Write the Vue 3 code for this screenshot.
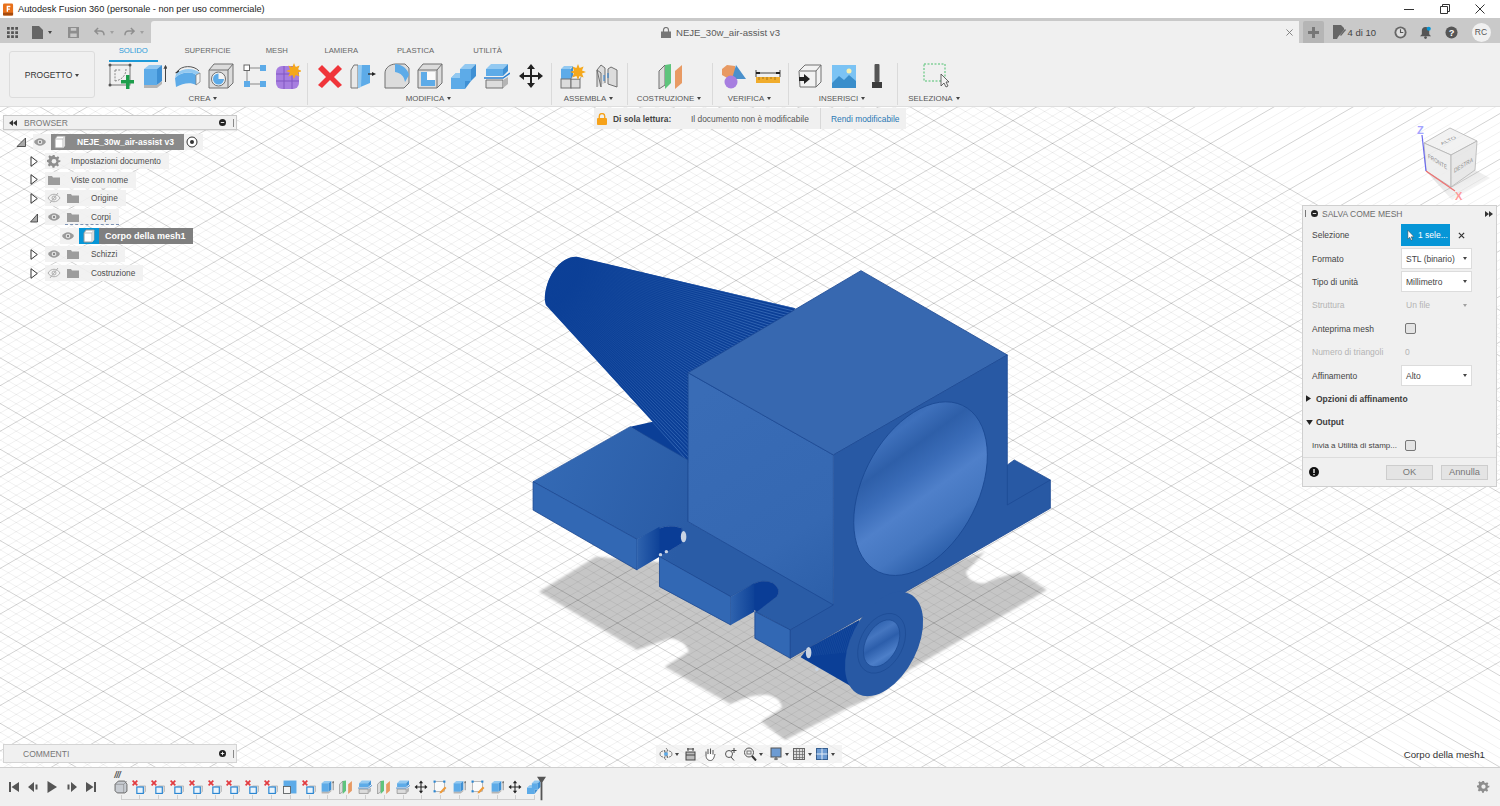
<script setup>
const B = '#5dabe8', BD = '#3f90d4', BL = '#93c9f1', G = '#dcdcdc', GD = '#b5b5b5', O = '#707070'
const sun = (x, y) => `<path d="M${x} ${y - 7}l1.6 4 4-1.6-1.6 4 4 1.6-4 1.6 1.6 4-4-1.6-1.6 4-1.6-4-4 1.6 1.6-4-4-1.6 4-1.6-1.6-4 4 1.6z" fill="#f5a81c"/>`
const icons = {
  sketch: `<rect x="2" y="2" width="20" height="20" fill="none" stroke="#777"/><g fill="#555"><circle cx="2" cy="2" r="1.5"/><circle cx="22" cy="2" r="1.5"/><circle cx="2" cy="22" r="1.5"/></g><path d="M7 7h6M18 6c0 6-4 11-11 12M7 7v11" fill="none" stroke="#888" stroke-dasharray="2 1.2"/><path d="M18 12h3.500v5H26v3.500h-4.500V26H18v-5.500h-5V17h5z" fill="#1d9e4c"/>`,
  extrude: `<path d="M3 6l5-4h13L16 6z" fill="${BL}"/><rect x="3" y="6" width="13" height="16" fill="${B}"/><path d="M16 6l5-4v16l-5 4z" fill="${BD}"/><path d="M3 22h13l5-4v3l-5 4H3z" fill="${GD}"/><path d="M24.500 19V3M23 6l1.500-3.500L26 6" fill="none" stroke="#444"/>`,
  revolve: `<path d="M2 9C6 2 19 2 24 8" fill="none" stroke="#555"/><path d="M0 10l4-3 .5 4z" fill="#333"/><path d="M0 15c6-6 16-7 21-3v10c-5-3-13-2-20 2z" fill="${B}"/><path d="M0 15c6-6 16-7 21-3l4-2c-7-6-18-5-24 1z" fill="${BL}"/><path d="M21 12l4-2v9l-4 3z" fill="#f2f2f2" stroke="#777" stroke-width=".7"/>`,
  hole: `<path d="M1 7l5-6h19v19l-5 5H1z" fill="${G}" stroke="${O}"/><path d="M1 7h19l5-6M20 7v18" fill="none" stroke="${O}"/><circle cx="10.500" cy="16" r="7" fill="#f4f4f4" stroke="${O}"/><path d="M10.500 16V10.500a5.500 5.500 0 1 1-5.500 5.500z" fill="${B}" transform="rotate(90 10.500 16)"/>`,
  pattern: `<g stroke="#888"><path d="M8 5h10M5 8v10M8 21h10" fill="none"/></g><rect x="2" y="2" width="5.500" height="5.500" fill="#fff" stroke="#666"/><rect x="18" y="2" width="6" height="6" fill="${B}"/><rect x="2" y="18" width="6" height="6" fill="${B}"/><rect x="18" y="18" width="6" height="6" fill="${B}"/>`,
  form: `<rect x="1" y="3" width="23" height="23" rx="6" fill="#a77ee0"/><path d="M1 11h23M1 18h23M9 3v23M17 3v23" stroke="#8156c2" fill="none"/>${sun(19, 7)}`,
  del: `<path d="M5 2l8 8 8-8 4 4-8 8 8 8-4 3-8-8-8 8-4-3 8-8-8-8z" fill="#f0353a"/>`,
  press: `<path d="M1 7l3-5h4v23H1z" fill="#e8e8e8" stroke="#777"/><path d="M8 2h12v18L8 25z" fill="${B}"/><path d="M8 2h4l-1 22-3 1z" fill="${BL}"/><path d="M18 11h5" stroke="#333" stroke-width="1.400"/><path d="M22 9l4 2-4 2z" fill="#222"/>`,
  fillet: `<path d="M1 25V10C1 5 6 1 12 1h9l4 4v15l-5 5z" fill="${G}" stroke="${O}"/><path d="M11 1c7 0 13 5 14 11l-4 7c-1-6-4-9-10-10z" fill="${B}"/>`,
  shell: `<path d="M1 7l5-6h19v19l-5 5H1z" fill="${G}" stroke="${O}"/><path d="M1 7h19l5-6M20 7v18" fill="none" stroke="${O}"/><rect x="4" y="9" width="14" height="14" fill="#fafafa"/><path d="M4 9h6v8H18v6H4z" fill="${B}"/>`,
  combine: `<path d="M9 6l5-5h11l-5 5z" fill="${BL}"/><path d="M9 6h11v12H9z" fill="${B}"/><path d="M20 6l5-5v12l-5 5z" fill="${BD}"/><path d="M0 15l5-5h9v16H0z" fill="${B}"/><path d="M0 15l5-5h4v5z" fill="${BL}"/><path d="M14 18h6l-6 8z" fill="${BD}"/>`,
  split: `<path d="M2 6l5-5h17l-5 5z" fill="${BL}"/><rect x="2" y="6" width="17" height="7" fill="${B}"/><path d="M19 6l5-5v7l-5 5z" fill="${BD}"/><path d="M0 15h19l7-5" fill="none" stroke="#2a7fd0" stroke-width="1.500"/><path d="M2 17h17v8H2z" fill="${G}" stroke="${O}"/><path d="M19 17l5-3v7l-5 4z" fill="${GD}"/>`,
  move: `<path d="M13 1l4 5h-3v6h6V9l5 4-5 4v-3h-6v6h3l-4 5-4-5h3v-6H6v3l-5-4 5-4v3h6V6H9z" fill="#222"/>`,
  asm: `<path d="M1 6l3-3h9l-3 3z" fill="${BL}"/><rect x="1" y="6" width="10" height="10" fill="${B}"/><path d="M11 6l2-3v10l-2 3z" fill="${BD}"/><rect x="1" y="16" width="10" height="9" fill="${G}" stroke="${O}"/><rect x="11" y="16" width="9" height="9" fill="${G}" stroke="${O}"/><path d="M13 12h9l-2 4h-9z" fill="#f4f4f4" stroke="${O}" stroke-width=".6"/>${sun(18, 8)}`,
  joint: `<path d="M3 24V7l4-5 4 3v15M3 7l4 3v14z" fill="${G}" stroke="${O}"/><path d="M23 24V7l-6-3-3 2v15z" fill="${G}" stroke="${O}"/><path d="M10 12v6M14 10v5" stroke="#2a7fd0"/>`,
  plane: `<path d="M1 8l6-6v20l-6 4z" fill="${G}" stroke="${O}"/><path d="M7 2l6-1v19l-6 6z" fill="#5ec47c"/><path d="M17 8l7-6v18l-7 6z" fill="#e89a63"/>`,
  inspect: `<path d="M1 6l5-4 8 1v9l-6 4-7-4z" fill="#e89a63"/><path d="M15 2l10 14H11z" fill="#4a90cc"/><circle cx="10" cy="19" r="6.500" fill="#a77ee0"/>`,
  measure: `<path d="M1 10h24M1 7v7M25 7v7" stroke="#444" fill="none"/><path d="M5 10H1M21 10h4" stroke="#222" stroke-width="2"/><rect x="1" y="14" width="24" height="6" fill="#f0ac2c"/><path d="M4 14v3M8 14v2M12 14v3M16 14v2M20 14v3" stroke="#8a5e10" stroke-width=".7"/>`,
  insert: `<path d="M2 8l6-6h16v17l-5 5H3z" fill="#f2f2f2" stroke="${O}"/><path d="M3 8h16l5-6M19 8v16" fill="none" stroke="${O}"/><path d="M2 14h5v-3l6 5-6 5v-3H2z" fill="#222"/>`,
  canvas: `<rect x="1" y="2" width="24" height="23" fill="#7bc3f4"/><circle cx="18" cy="8" r="2.500" fill="#f7f0b0"/><path d="M1 20l7-7 5 4 5-5 7 6v7H1z" fill="#3a8ecb"/>`,
  bolt: `<rect x="10.500" y="1" width="5" height="18" rx="1" fill="#555"/><path d="M8 19h10v6H8z" fill="#3d3d3d"/>`,
  select: `<rect x="1" y="1" width="21" height="17" fill="none" stroke="#4cc06e" stroke-dasharray="2 1.500"/><path d="M18 11l0 12 3-3 2 4 2-1-2-4h3z" fill="#f2f2f2" stroke="#444" stroke-width=".8"/>`,
  tdel: `<path d="M0 2l2-2 3 3 3-3 2 2-3 3 3 3-2 2-3-3-3 3-2-2 3-3z" fill="#e23b40" transform="scale(1.100)"/><path d="M11 14l3-3h11v10l-3 3H11z" fill="#ddd" stroke="#999"/><rect x="9" y="13" width="12" height="12" fill="#e8f3fc" stroke="#2a86d2" stroke-width="2.200"/>`,
  torigin: `<path d="M2 8l6-6h12l4 6v13l-4 3H6l-4-4z" fill="#c8ccd2" stroke="#666" stroke-width="1.800"/><path d="M2 8h16l6-6M18 8v16" fill="none" stroke="#777"/>`,
  tshell: `<path d="M1 1h24v24H1z" fill="${B}"/><rect x="1" y="12" width="13" height="13" fill="#f4f4f4" stroke="#555" stroke-width="1.500"/>`,
  tsk: `<rect x="3" y="3" width="18" height="18" fill="#fafafa" stroke="#888"/><g fill="#2a86d2"><rect x="1" y="1" width="4" height="4"/><rect x="19" y="1" width="4" height="4"/><rect x="1" y="19" width="4" height="4"/></g><path d="M13 22l9-10 3 3-9 9-4 1z" fill="#ee9a3a"/>`
}
const groups = [
  { label: 'CREA', w: 207, items: ['sketch', 'extrude', 'revolve', 'hole', 'pattern', 'form'] },
  { label: 'MODIFICA', w: 244, items: ['del', 'press', 'fillet', 'shell', 'combine', 'split', 'move'] },
  { label: 'ASSEMBLA', w: 76, items: ['asm', 'joint'] },
  { label: 'COSTRUZIONE', w: 85, items: ['plane'] },
  { label: 'VERIFICA', w: 76, items: ['inspect', 'measure'] },
  { label: 'INSERISCI', w: 109, items: ['insert', 'canvas', 'bolt'] },
  { label: 'SELEZIONA', w: 75, items: ['select'] }
]
const tabs = [
  { t: 'SOLIDO', w: 67.5 },
  { t: 'SUPERFICIE', w: 81 },
  { t: 'MESH', w: 57.5 },
  { t: 'LAMIERA', w: 71.5 },
  { t: 'PLASTICA', w: 77 },
  { t: 'UTILITÀ', w: 67 }
]
const timeline = ['torigin', 'tdel', 'tdel', 'tdel', 'tdel', 'tdel', 'tdel', 'tdel', 'tdel', 'tshell', 'tdel', 'extrude', 'plane', 'split', 'plane', 'split', 'move', 'tsk', 'extrude', 'tsk', 'extrude', 'move', 'combine']

const k = Math.tan(Math.PI / 6)
const step = 45.67 / 5
let minor = '', major = ''
for (let i = -90; i <= 90; i++) {
  const a = 266.5 + i * step
  const b = 340.1 + (i + 40) * step
  const sa = `M0 ${a.toFixed(1)}L1500 ${(a + 1500 * k).toFixed(1)}`
  const sb = `M0 ${b.toFixed(1)}L1500 ${(b - 1500 * k).toFixed(1)}`
  if (((i % 5) + 5) % 5 === 0) major += sa + sb
  else minor += sa + sb
}
let coneLines = ''
const a0 = Math.atan(0.242), a1 = Math.atan(1.148)
for (let i = 0; i <= 64; i++) {
  const t = a0 + (a1 - a0) * i / 64
  coneLines += `M-102 -43L${(-102 + 1300 * Math.cos(t)).toFixed(1)} ${(-43 + 1300 * Math.sin(t)).toFixed(1)}`
}
let bossLines = ''
for (let i = 0; i < 34; i++) {
  const x = 815 + i * 5.500
  bossLines += `M${x} ${1222 - i * 0.6}l25 -90`
}

const eye = `<path d="M1 7c3-5 9-5 12 0-3 5-9 5-12 0z" fill="#9a9a9a"/><circle cx="7" cy="7" r="2.300" fill="#e8e8e8"/><circle cx="7" cy="7" r="1.200" fill="#888"/>`
const eyeOff = `<path d="M1 7c3-5 9-5 12 0-3 5-9 5-12 0z" fill="none" stroke="#b0b0b0"/><circle cx="7" cy="7" r="2" fill="none" stroke="#b0b0b0"/><path d="M3 12L11 2" stroke="#b0b0b0"/>`
const folder = `<path d="M1 3h4l1 1.500h7V12H1z" fill="#9c9c9c"/>`
const gear = `<path d="M6 1h2l.4 1.800 1.500.6 1.600-1 1.400 1.400-1 1.600.6 1.500L14 6.300v2l-1.800.4-.6 1.500 1 1.600-1.400 1.400-1.600-1-1.500.6L7.800 14.500h-2l-.4-1.800-1.500-.6-1.600 1-1.400-1.400 1-1.600-.6-1.500L0 8.300v-2l1.800-.4.6-1.500-1-1.600 1.400-1.400 1.600 1 1.500-.6z" fill="#8e8e8e" transform="scale(.95)"/><circle cx="7" cy="7.200" r="2.300" fill="#f0f0f0"/>`
const box = `<path d="M2 4l2-3h8v10l-2 2H2z" fill="#fff" stroke="#999"/><path d="M2 4h8l2-3M10 4v9" fill="none" stroke="#bbb"/><path d="M10 4l2-3v10l-2 2z" fill="#dcdcdc"/>`
const radio = `<circle cx="7" cy="7" r="5" fill="#fff" stroke="#333"/><circle cx="7" cy="7" r="2" fill="#333"/>`
const tree = [
  { cls: 'lv1', a: gear, text: 'Impostazioni documento' },
  { cls: 'lv1', a: folder, text: 'Viste con nome' },
  { cls: 'lv1', a: eyeOff, b: folder, text: 'Origine' },
  { cls: 'lv1 corpi', open: true, a: eye, b: folder, text: 'Corpi' },
  { sel: true },
  { cls: 'lv1', a: eye, b: folder, text: 'Schizzi' },
  { cls: 'lv1', a: eyeOff, b: folder, text: 'Costruzione' }
]
const nav = [
  { d: `<circle cx="7" cy="7" r="2" fill="#5dabe8"/><path d="M7 1l2 2.500H8V5.500M6 5.500V3.500H5zM7 13l-2-2.500h1V8.500M8 8.500v2h1zM1 7c0-2 1.500-2.800 3-3M13 7c0 2-1.500 2.800-3 3M1 7c0 2 1.500 2.800 3 3M13 7c0-2-1.500-2.800-3-3" fill="none" stroke="#666" stroke-width=".8"/>`, c: 1 },
  { d: `<rect x="3" y="5" width="9" height="8" fill="#bbb" stroke="#444"/><path d="M3 8h9M5 1v3M10 1v3M4 2h7" stroke="#444" fill="none"/>` },
  { d: `<path d="M3 8V4.500M5 7V2M7.500 7V1.500M10 7.500V3M3 8c0 4 2 5.500 4.500 5.500S11 11 12 7" fill="#fff" stroke="#555"/>` },
  { d: `<circle cx="6" cy="7" r="3.500" fill="none" stroke="#555"/><path d="M8 10l3 3.500M11 1v5M8.500 3.500h5" stroke="#444" fill="none"/>` },
  { d: `<circle cx="6" cy="5.500" r="4.500" fill="#eee" stroke="#555"/><path d="M9 9l4 4.500" stroke="#333" stroke-width="2"/><rect x="4" y="4" width="4" height="3" fill="none" stroke="#777"/>`, c: 1 },
  { d: `<rect x="2" y="1" width="10" height="9" fill="#6d9bd2" stroke="#555"/><path d="M5 12h4M7 10v3" stroke="#555"/>`, c: 1 },
  { d: `<rect x="1.500" y="1.500" width="11" height="11" fill="#ddd" stroke="#666"/><path d="M1.500 4.500h11M1.500 7.500h11M1.500 10.500h11M4.500 1.500v11M7.500 1.500v11M10.500 1.500v11" stroke="#666" stroke-width=".7"/>`, c: 1 },
  { d: `<rect x="1.500" y="1.500" width="11" height="11" fill="#6d9bd2" stroke="#355e8f"/><path d="M7 1.500v11M1.500 7h11" stroke="#e6eef8"/>`, c: 1 }
]
</script>

<template>
  <div class="app">
    <header class="titlebar">
      <svg class="appicon" viewBox="0 0 12 13"><rect width="11" height="13" rx="1.500" fill="#e8701a" /><rect y="10" width="11" height="3" fill="#a64a0c" /><path d="M4 2.500h4v1.500H5.500v1.300H7.500v1.400H5.500V9H4z" fill="#fff" /></svg>
      <span class="apptitle">Autodesk Fusion 360 (personale - non per uso commerciale)</span>
      <div class="winbtns">
        <svg viewBox="0 0 12 12"><path d="M1 6.500h10" stroke="#333" /></svg>
        <svg viewBox="0 0 12 12"><path d="M1.500 3.500h7v7h-7zM3.500 3.500v-2h7v7h-2" fill="none" stroke="#333" /></svg>
        <svg viewBox="0 0 12 12"><path d="M1.500 1.500l9 9M10.500 1.500l-9 9" stroke="#333" /></svg>
      </div>
    </header>

    <div class="tabstrip">
      <div class="quick">
        <svg class="q-grid" viewBox="0 0 12 12"><path d="M0 0h3v3H0zM4.500 0h3v3h-3zM9 0h3v3H9zM0 4.500h3v3H0zM4.500 4.500h3v3h-3zM9 4.500h3v3H9zM0 9h3v3H0zM4.500 9h3v3h-3zM9 9h3v3H9z" fill="#555" /></svg>
        <svg class="q-file" viewBox="0 0 11 13"><path d="M0 0h7l4 4v9H0z" fill="#666" /></svg>
        <i class="caret dk"></i>
        <svg class="q-save" viewBox="0 0 12 12"><path d="M0 0h12v12H0z" fill="#8e8e8e" /><path d="M3 1h6v3H3zM2.500 7h7v4h-7z" fill="#c8c8c8" /></svg>
        <svg class="q-undo" viewBox="0 0 12 11"><path d="M4.500 1L1 4.500 4.500 8M1 4.500h6c2.500 0 4 1.500 4 4.500" fill="none" stroke="#8e8e8e" stroke-width="1.600" /></svg>
        <i class="caret lt"></i>
        <svg class="q-redo" viewBox="0 0 12 11"><path d="M7.500 1L11 4.500 7.500 8M11 4.500H5C2.500 4.500 1 6 1 9" fill="none" stroke="#8e8e8e" stroke-width="1.600" /></svg>
        <i class="caret lt"></i>
      </div>
      <div class="doctab">
        <svg class="lockicon" viewBox="0 0 10 11"><path d="M2.500 5V3a2.500 2.500 0 0 1 5 0v2" fill="none" stroke="#777" stroke-width="1.200" /><rect y="4.500" width="10" height="6.500" fill="#777" /></svg>
        <span class="docname">NEJE_30w_air-assist v3</span>
        <svg class="tabclose" viewBox="0 0 8 8"><path d="M.5.500l7 7M7.500.500l-7 7" stroke="#777" /></svg>
      </div>
      <div class="acct">
        <span class="plus"><svg viewBox="0 0 11 11"><path d="M4 0h3v4h4v3H7v4H4V7H0V4h4z" fill="#777" /></svg></span>
        <svg class="a-doc" viewBox="0 0 13 14"><path d="M0 0h8l3 3v2L5 12l-1 2H0z" fill="#666" /><path d="M7 10l5-6 1 1-5 6z" fill="#666" /></svg>
        <span class="count">4 di 10</span>
        <svg class="a-clock" viewBox="0 0 14 14"><circle cx="7" cy="7" r="6.500" fill="#666" /><circle cx="7" cy="7" r="4.500" fill="#ddd" /><path d="M7 3.500V7h3" fill="none" stroke="#555" stroke-width="1.200" /></svg>
        <svg class="a-bell" viewBox="0 0 13 14"><path d="M6 1c3 0 4 2 4 4v4l2 2H0l2-2V5c0-2 1-4 4-4z" fill="#555" /><circle cx="6" cy="12.500" r="1.500" fill="#555" /><circle cx="9.500" cy="3" r="2.200" fill="#0696d7" /></svg>
        <svg class="a-help" viewBox="0 0 14 14"><circle cx="7" cy="7" r="6.500" fill="#555" /><text x="7" y="10.500" class="helpq">?</text></svg>
        <span class="avatar">RC</span>
      </div>
    </div>

    <section class="ribbon">
      <div class="project-wrap"><button class="project">PROGETTO<i class="caret dk"></i></button></div>
      <div class="ribbon-main">
        <nav class="tabs">
          <span v-for="(t, i) in tabs" :key="t.t" class="tab" :class="{ active: i === 0 }" :style="{ width: t.w + 'px' }">{{ t.t }}</span>
        </nav>
        <div class="groups">
          <div v-for="g in groups" :key="g.label" class="group" :style="{ width: g.w + 'px' }">
            <div class="tools">
              <svg v-for="it in g.items" :key="it" class="tool" viewBox="0 0 26 26" v-html="icons[it]"></svg>
            </div>
            <div class="grouplabel">{{ g.label }}<i class="caret dk"></i></div>
          </div>
        </div>
      </div>
    </section>

    <main class="viewport">
      <svg class="scene" viewBox="0 107 1500 661">
        <defs>
          <filter id="soft" x="-5%" y="-5%" width="110%" height="110%"><feGaussianBlur stdDeviation="3" /></filter>
          <linearGradient id="plate" gradientUnits="userSpaceOnUse" x1="60" y1="700" x2="480" y2="850"><stop offset="0" stop-color="#3369b4" /><stop offset="1" stop-color="#2a5ca6" /></linearGradient>
          <linearGradient id="front" gradientUnits="userSpaceOnUse" x1="500" y1="450" x2="900" y2="1040"><stop offset="0" stop-color="#396cb6" /><stop offset=".7" stop-color="#3568b2" /><stop offset="1" stop-color="#2d60aa" /></linearGradient>
          <linearGradient id="bore" gradientUnits="userSpaceOnUse" x1="1290" y1="470" x2="1040" y2="960">
            <stop offset="0" stop-color="#2a5ca8" /><stop offset=".18" stop-color="#3e70bb" /><stop offset=".3" stop-color="#2e5fa9" /><stop offset=".42" stop-color="#3a6cb8" /><stop offset=".55" stop-color="#4f80ca" /><stop offset=".72" stop-color="#4476c0" /><stop offset=".85" stop-color="#2f62ad" /><stop offset="1" stop-color="#2a5ca8" />
          </linearGradient>
          <linearGradient id="bore2" gradientUnits="userSpaceOnUse" x1="1090" y1="1115" x2="1010" y2="1245">
            <stop offset="0" stop-color="#2358a6" /><stop offset=".3" stop-color="#4576c0" /><stop offset=".5" stop-color="#2c5eab" /><stop offset=".75" stop-color="#4d7fc9" /><stop offset="1" stop-color="#2358a6" />
          </linearGradient>
          <linearGradient id="notch" gradientUnits="userSpaceOnUse" x1="340" y1="900" x2="405" y2="900"><stop offset="0" stop-color="#2f63ae" /><stop offset="1" stop-color="#0e4298" /></linearGradient>
          <linearGradient id="notch2" gradientUnits="userSpaceOnUse" x1="612" y1="1060" x2="680" y2="1060"><stop offset="0" stop-color="#2f63ae" /><stop offset="1" stop-color="#0e4298" /></linearGradient>
          <radialGradient id="stripe" gradientUnits="userSpaceOnUse" cx="-102" cy="-43" r="850"><stop offset=".35" stop-color="#0c4097" /><stop offset=".65" stop-color="#1f53a3" /><stop offset="1" stop-color="#3f72bd" /></radialGradient>
          <clipPath id="conec"><path d="M72 150C72 85 115 18 165 20L800 175 490 640 320 530 385 515 75 165z" /></clipPath>
          <clipPath id="bossc"><path d="M835 1195L985 1110 1000 1332 815 1222z" /></clipPath>
          <linearGradient id="cubeshadow" x1="0" y1="0" x2="1" y2="1"><stop offset="0" stop-color="#999" stop-opacity=".35" /><stop offset="1" stop-color="#999" stop-opacity="0" /></linearGradient>
        </defs>
        <g transform="translate(520 250) scale(.3444 .3333)">
          <path class="shadow" filter="url(#soft)" d="M55 1025L220 920 1100 1000 1350 905 1295 965Q1300 1000 1350 1000L1385 985 1450 965 1530 1020 1130 1260 1050 1330 960 1370 770 1470 700 1415 760 1375Q760 1345 720 1335 680 1330 610 1362L420 1250 490 1205Q480 1170 435 1165L340 1200z" />
        </g>
        <path :d="minor" class="g-minor" />
        <path :d="major" class="g-major" />

        <g transform="translate(520 250) scale(.3444 .3333)" stroke-linejoin="round">
          <path d="M72 150C72 85 115 18 165 20L800 175 490 640 320 530 385 515 75 165z" fill="#0b3f97" />
          <path :d="coneLines" clip-path="url(#conec)" stroke="url(#stripe)" stroke-width="2.200" fill="none" />

          <path d="M38 695L320 530 488 630V815L915 1065 785 1140 685 1085 745 1040Q760 1020 735 1000 705 985 672 1005L612 1040 405 920 470 880 470 835Q430 820 395 840L340 868z" fill="url(#plate)" stroke="#1c4a94" stroke-width="2" />
          <path d="M395 840Q430 820 470 835L470 880 405 920z" fill="#0a3d96" />
          <path d="M672 1005Q705 985 735 1000 760 1020 745 1040L688 1085 672 1075z" fill="#0a3d96" />
          <path d="M38 695L340 868V960L38 780z" fill="#3268b4" stroke="#1c4a94" stroke-width="2.500" />
          <path d="M340 868L405 830V920L340 960z" fill="url(#notch)" />
          <path d="M405 920L612 1040V1125L405 1010z" fill="#3268b4" stroke="#1c4a94" stroke-width="2.500" />
          <path d="M612 1040L680 1000V1085L612 1125z" fill="url(#notch2)" />
          <path d="M682 1085L785 1140V1225L682 1165z" fill="#3268b4" stroke="#1c4a94" stroke-width="2.500" />

          <path d="M835 1195L985 1110 1000 1332 815 1222z" fill="#0b3f97" />
          <path :d="bossLines" clip-path="url(#bossc)" stroke="#2a5da8" stroke-width="1" fill="none" />

          <path d="M488 368L910 615V1065L488 815z" fill="url(#front)" stroke="#1c4a94" stroke-width="2.500" />
          <path d="M488 368L990 62 1415 315 910 615z" fill="#3768b0" stroke="#1c4a94" stroke-width="2.500" />
          <path d="M910 615L1415 315V645L1435 630 1540 690V775L785 1225V1140L910 1065z" fill="#2859a4" />
          <path d="M910 615L1415 315V765L1540 690M1415 645L1435 630 1540 690V775L785 1225V1140L910 1065" fill="none" stroke="#1c4a94" stroke-width="2.300" />
          <ellipse cx="1163" cy="716" rx="278" ry="168" transform="rotate(-64 1163 716)" fill="url(#bore)" stroke="#1c4a94" stroke-width="2.500" />

          <ellipse cx="1057" cy="1182" rx="168" ry="96" transform="rotate(-64 1057 1182)" fill="#2859a4" />
          <ellipse cx="1050" cy="1180" rx="95" ry="62" transform="rotate(-64 1050 1180)" fill="none" stroke="#1c4a94" stroke-width="2" />
          <ellipse cx="1050" cy="1180" rx="75" ry="46" transform="rotate(-64 1050 1180)" fill="url(#bore2)" stroke="#1c4a94" stroke-width="2" />

          <g fill="#c9d4e4">
            <ellipse cx="475" cy="860" rx="8" ry="17" />
            <circle cx="425" cy="905" r="5" />
            <circle cx="408" cy="914" r="5" />
            <ellipse cx="838" cy="1208" rx="8" ry="17" />
            <circle cx="862" cy="1258" r="5" />
          </g>
        </g>

        <g class="viewcube">
          <path d="M1426 171L1451 187 1475 170 1490 178 1452 200z" fill="url(#cubeshadow)" stroke="none" />
          <path d="M1424 143L1450 128 1477 141 1451 155z" class="cface top" />
          <path d="M1424 143L1451 155 1451 187 1426 171z" class="cface" />
          <path d="M1451 155L1477 141 1475 170 1451 187z" class="cface side" />
          <text class="cubelabel" transform="matrix(.84 -.4 .5 .42 1442 145)">ALTO</text>
          <text class="cubelabel" transform="matrix(.66 .4 0 .9 1428 158)">FRONTE</text>
          <text class="cubelabel" transform="matrix(.66 -.4 0 .9 1454 173)">DESTRA</text>
          <path d="M1426 171L1422 135" stroke="#6a6af0" stroke-width="1.200" />
          <path d="M1426 171L1455 191" stroke="#f07070" stroke-width="1.200" />
          <text class="axis z" x="1417" y="134">Z</text>
          <text class="axis x" x="1455" y="200">X</text>
        </g>
      </svg>

      <aside class="browser">
        <div class="pbar">
          <svg class="pbar-rw" viewBox="0 0 8 6"><path d="M4 0v6L0 3zM8 0v6L4 3z" fill="#333" /></svg>
          <span class="pbar-title">BROWSER</span>
          <svg class="pbar-dot" viewBox="0 0 8 8"><circle cx="4" cy="4" r="4" fill="#222" /><path d="M2 4h4" stroke="#fff" /></svg>
          <i class="pbar-grip"></i>
        </div>
        <div class="tree">
          <div class="row lv0">
            <svg class="twist big" viewBox="0 0 10 10"><path d="M9.500 1v8.500H1z" fill="#aaa" stroke="#333" stroke-width=".8" /></svg>
            <div class="pill root">
              <svg class="ti" viewBox="0 0 14 14" v-html="eye"></svg>
              <div class="sel"><svg class="ti" viewBox="0 0 14 14" v-html="box"></svg><span class="seltxt">NEJE_30w_air-assist v3</span></div>
              <svg class="ti" viewBox="0 0 14 14" v-html="radio"></svg>
            </div>
          </div>
          <template v-for="r in tree" :key="r.text || 'sel'">
            <div v-if="r.sel" class="row lv2">
              <div class="pill bodyrow">
                <svg class="ti" viewBox="0 0 14 14" v-html="eye"></svg>
                <div class="bodysel">
                  <span class="bluebox"><svg class="ti" viewBox="0 0 14 14" v-html="box"></svg></span>
                  <span class="bodytxt">Corpo della mesh1</span>
                </div>
              </div>
            </div>
            <div v-else class="row" :class="r.cls">
              <svg v-if="r.open" class="twist" viewBox="0 0 8 11"><path d="M7.500 2v8H.5z" fill="#aaa" stroke="#333" stroke-width=".8" /></svg>
              <svg v-else class="twist" viewBox="0 0 8 11"><path d="M1 .7L7.300 5.500 1 10.300z" fill="#fff" stroke="#333" stroke-width="1" /></svg>
              <div class="pill" :class="{ two: r.b }">
                <svg class="ti" viewBox="0 0 14 14" v-html="r.a"></svg>
                <svg v-if="r.b" class="ti" viewBox="0 0 14 14" v-html="r.b"></svg>
                <span class="treetxt">{{ r.text }}</span>
              </div>
            </div>
          </template>
        </div>
      </aside>

      <div class="banner">
        <svg class="ban-lock" viewBox="0 0 11 13"><path d="M2.500 6V3.500a3 3 0 0 1 6 0V6" fill="none" stroke="#f6a21a" stroke-width="1.500" /><rect y="5.500" width="11" height="7.500" rx="1" fill="#f6a21a" /></svg>
        <b class="ban-b">Di sola lettura:</b>
        <span class="ban-t">Il documento non è modificabile</span>
        <i class="ban-sep"></i>
        <span class="ban-l">Rendi modificabile</span>
      </div>

      <aside class="meshpanel">
        <div class="mp-head">
          <i class="mp-grip"></i>
          <svg class="mp-dot" viewBox="0 0 8 8"><circle cx="4" cy="4" r="4" fill="#222" /><path d="M2 4h4" stroke="#fff" /></svg>
          <span class="mp-title">SALVA COME MESH</span>
          <svg class="mp-ff" viewBox="0 0 8 6"><path d="M0 0v6l4-3zM4 0v6l4-3z" fill="#333" /></svg>
        </div>
        <div class="mp-row"><label>Selezione</label>
          <span class="pick"><svg viewBox="0 0 8 12"><path d="M1 0v10l2.200-2 1.500 3.500 1.500-.7L4.700 7.500H8z" fill="#fff" stroke="#333" stroke-width=".5" /></svg>1 sele...</span>
          <svg class="pick-x" viewBox="0 0 8 8"><path d="M1 1l6 6M7 1L1 7" stroke="#333" stroke-width="1.400" /></svg>
        </div>
        <div class="mp-row"><label>Formato</label><span class="drop">STL (binario)<i class="caret dk"></i></span></div>
        <div class="mp-row"><label>Tipo di unità</label><span class="drop">Millimetro<i class="caret dk"></i></span></div>
        <div class="mp-row off"><label>Struttura</label><span class="drop flat">Un file<i class="caret lt"></i></span></div>
        <div class="mp-row"><label>Anteprima mesh</label><i class="check"></i></div>
        <div class="mp-row off"><label>Numero di triangoli</label><span class="zero">0</span></div>
        <div class="mp-row"><label>Affinamento</label><span class="drop">Alto<i class="caret dk"></i></span></div>
        <div class="mp-row sect"><svg viewBox="0 0 6 8"><path d="M0 0l6 4-6 4z" fill="#222" /></svg><b>Opzioni di affinamento</b></div>
        <div class="mp-row sect open"><svg viewBox="0 0 8 6"><path d="M0 0h8L4 6z" fill="#222" /></svg><b>Output</b></div>
        <div class="mp-row"><label class="tiny">Invia a Utilità di stamp...</label><i class="check"></i></div>
        <div class="mp-foot">
          <svg class="mp-info" viewBox="0 0 10 10"><circle cx="5" cy="5" r="5" fill="#111" /><path d="M5 2v4M5 7v1.200" stroke="#fff" stroke-width="1.300" /></svg>
          <button class="btn ok">OK</button>
          <button class="btn">Annulla</button>
        </div>
      </aside>

      <aside class="comments">
        <span class="c-title">COMMENTI</span>
        <svg class="pbar-dot" viewBox="0 0 8 8"><circle cx="4" cy="4" r="4" fill="#222" /><path d="M2 4h4M4 2v4" stroke="#fff" /></svg>
        <i class="pbar-grip"></i>
      </aside>

      <div class="navbar">
        <span v-for="(n, i) in nav" :key="i" class="navitem"><svg viewBox="0 0 14 14" v-html="n.d"></svg><i v-if="n.c" class="caret dk"></i></span>
      </div>
      <span class="status">Corpo della mesh1</span>
    </main>

    <footer class="timeline">
      <div class="play">
        <svg viewBox="0 0 12 12"><path d="M1 1h2v10H1zM11 1v10L3.500 6z" fill="#555" /></svg>
        <svg viewBox="0 0 12 12"><path d="M7 1v10L1 6zM8.500 3.500h2v5h-2z" fill="#555" /></svg>
        <svg viewBox="0 0 12 12"><path d="M1.500 0v12L11 6z" fill="#555" /></svg>
        <svg viewBox="0 0 12 12"><path d="M5 1v10l6-5zM1.500 3.500h2v5h-2z" fill="#555" /></svg>
        <svg viewBox="0 0 12 12"><path d="M1 1v10l7.500-5zM9 1h2v10H9z" fill="#555" /></svg>
      </div>
      <div class="track">
        <div v-for="(t, i) in timeline" :key="i" class="cell"><svg viewBox="0 0 26 26" v-html="icons[t]"></svg></div>
        <span class="slashes">///</span>
        <svg class="marker" viewBox="0 0 10 26"><path d="M0 0h10L6 6v20H4V6z" fill="#555" /></svg>
      </div>
      <svg class="tl-gear" viewBox="0 0 14 15" v-html="gear"></svg>
    </footer>
  </div>
</template>

<style scoped>
.app { width: 1500px; height: 806px; display: flex; flex-direction: column; overflow: hidden; background: #fff; font-family: "Liberation Sans", Arial, sans-serif; color: #444; }
.titlebar { height: 18px; flex: none; display: flex; align-items: center; background: #fff; }
.appicon { width: 11px; height: 13px; margin-left: 3px; }
.apptitle { margin-left: 4px; font-size: 9.200px; color: #222; white-space: nowrap; }
.winbtns { margin-left: auto; display: flex; gap: 23.500px; margin-right: 14px; }
.winbtns svg { width: 12px; height: 12px; }

.tabstrip { height: 25px; flex: none; display: flex; background: #c9c9c9; padding-top: 3px; box-sizing: border-box; }
.quick { width: 151px; flex: none; display: flex; align-items: center; padding-left: 7px; box-sizing: border-box; }
.q-grid { width: 11px; height: 11px; }
.q-file { width: 11px; height: 13px; margin-left: 14px; }
.q-save { width: 11px; height: 11px; margin-left: 16px; }
.q-undo { width: 11px; height: 10px; margin-left: 15px; }
.q-redo { width: 11px; height: 10px; margin-left: 10px; }
.quick .caret { margin-left: 5px; }
.doctab { width: 1148px; flex: none; background: #f0f0f0; border-top-left-radius: 3px; display: flex; align-items: center; padding-left: 510px; box-sizing: border-box; position: relative; }
.lockicon { width: 10px; height: 11px; }
.docname { margin-left: 5px; font-size: 9.600px; color: #5a5a5a; white-space: nowrap; }
.tabclose { width: 7px; height: 7px; position: absolute; right: 6px; top: 8px; }
.acct { flex: 1; display: flex; align-items: center; position: relative; }
.plus { width: 21px; height: 22px; background: #b5b5b5; display: flex; align-items: center; justify-content: center; margin-left: 3.500px; border-radius: 2px 2px 0 0; }
.plus svg { width: 11px; height: 11px; }
.a-doc { width: 13px; height: 14px; margin-left: 9px; }
.count { font-size: 9.500px; color: #444; margin-left: 2px; width: 25px; white-space: nowrap; }
.a-clock { width: 13px; height: 13px; margin-left: 21px; }
.a-bell { width: 12px; height: 13px; margin-left: 13px; }
.a-help { width: 13px; height: 13px; margin-left: 13px; }
.helpq { font-size: 10px; font-weight: bold; fill: #fff; text-anchor: middle; font-family: "Liberation Sans", sans-serif; }
.avatar { width: 19px; height: 19px; border-radius: 50%; background: #f0f0f0; font-size: 8.500px; color: #555; display: flex; align-items: center; justify-content: center; margin-left: 14px; }

.caret { display: inline-block; width: 0; height: 0; border-left: 2.500px solid transparent; border-right: 2.500px solid transparent; border-top: 3px solid #444; margin-left: 3px; vertical-align: middle; }
.caret.dk { border-top-color: #444; }
.caret.lt { border-top-color: #a0a0a0; }

.ribbon { height: 64px; flex: none; display: flex; background: #f0f0f0; border-bottom: 1px solid #dedede; box-sizing: border-box; }
.project-wrap { width: 101px; flex: none; padding: 8px 0 0 9px; box-sizing: border-box; }
.project { width: 86px; height: 47px; border: 1px solid #dcdcdc; border-radius: 3px; background: #f0f0f0; font: 8.500px "Liberation Sans", sans-serif; color: #333; padding: 0; }
.ribbon-main { flex: 1; display: flex; flex-direction: column; }
.tabs { height: 19px; display: flex; flex: none; }
.tab { padding-top: 3px; font-size: 7.700px; line-height: 10px; color: #666; position: relative; white-space: nowrap; text-align: center; flex: none; box-sizing: border-box; }
.tab.active { color: #2b9ad9; }
.tab.active::after { content: ""; position: absolute; left: 9px; right: 9px; bottom: 0; height: 2px; background: #1e9ad8; }
.tabs .tab:first-child { margin-left: -1.500px; }
.groups { display: flex; flex: 1; }
.group { flex: none; display: flex; flex-direction: column; align-items: center; position: relative; }
.group:not(:last-child)::after { content: ""; position: absolute; right: 0; top: 1px; bottom: 3px; width: 1px; background: #dadada; }
.tools { height: 28px; display: flex; justify-content: center; align-items: center; }
.tool { width: 26px; height: 26px; margin: 0 3.750px; }
.grouplabel { font-size: 7.900px; line-height: 18px; color: #555; white-space: nowrap; margin-right: 3px; }

.viewport { flex: 1; position: relative; overflow: hidden; background: #fff; border-bottom: 1px solid #cfcfcf; }
.scene { position: absolute; left: 0; top: 0; width: 1500px; height: 661px; display: block; }
.g-minor { stroke: rgba(0, 0, 0, .08); stroke-width: .8; fill: none; }
.g-major { stroke: rgba(0, 0, 0, .2); stroke-width: .9; fill: none; }
.shadow { fill: #bababa; fill-opacity: .82; }
.cface { fill: #ececec; fill-opacity: .85; stroke: #b4b4b4; stroke-width: .8; }
.cface.top { fill: #f0f0f0; }
.cface.side { fill: #e4e4e4; }
.cubelabel { font-size: 7px; fill: #8c8c8c; font-family: "Liberation Sans", sans-serif; }
.axis { font-size: 11px; font-weight: bold; font-family: "Liberation Sans", sans-serif; }
.axis.z { fill: #a4a4ff; }
.axis.x { fill: #ff9a9a; }

.browser { position: absolute; left: 3px; top: 8px; width: 234px; }
.pbar { height: 15px; background: #f0f0f0; border: 1px solid #c9c9c9; box-shadow: 0 1px 1px rgba(0,0,0,.08); display: flex; align-items: center; box-sizing: border-box; }
.pbar-rw { width: 8px; height: 6px; margin-left: 5px; }
.pbar-title { font-size: 8.500px; color: #777; margin-left: 7px; }
.pbar-dot { width: 7px; height: 7px; margin-left: auto; }
.pbar-grip { width: 1px; height: 8px; background: #888; margin: 0 2px 0 7px; }
.tree { margin-top: 3px; }
.row { height: 18.700px; display: flex; align-items: center; position: relative; }
.twist { width: 8px; height: 11px; flex: none; }
.twist.big { width: 10px; height: 10px; }
.lv0 { padding-left: 13px; }
.lv0 .twist { margin-right: 7px; }
.lv1 { padding-left: 27px; }
.lv1 .twist { margin-right: 7px; }
.lv2 { padding-left: 57px; }
.pill { display: flex; align-items: center; height: 16px; background: rgba(240,240,240,.88); padding-left: 2px; padding-right: 8px; }
.ti { width: 14px; height: 14px; flex: none; }
.treetxt { font-size: 8.300px; color: #4c4c4c; margin-left: 10px; white-space: nowrap; }
.pill.two .treetxt { margin-left: 11px; }
.pill.two .ti + .ti { margin-left: 5px; }
.corpi::after { content: ""; position: absolute; left: 62px; top: 16px; width: 54px; border-bottom: 1.500px dashed #7d93b4; }
.pill.root { padding: 0 4px 0 0; }
.sel { display: flex; align-items: center; height: 16px; width: 133px; margin: 0 1px 0 4px; background: #8a8a8a; padding-left: 2px; box-sizing: border-box; }
.seltxt { font-size: 8.500px; font-weight: bold; color: #fff; margin-left: 10px; white-space: nowrap; }
.pill.bodyrow { padding: 0; height: 16px; padding-left: 1px; }
.bodysel { display: flex; align-items: center; height: 16px; margin-left: 4px; background: #7f7f7f; width: 114px; }
.bluebox { width: 20px; height: 16px; background: #0696d7; display: flex; align-items: center; justify-content: center; flex: none; }
.bodytxt { font-size: 9px; font-weight: bold; color: #fff; margin-left: 6px; white-space: nowrap; }

.banner { position: absolute; left: 594px; top: 1px; width: 312px; height: 21px; background: #f0f0f0; display: flex; align-items: center; font-size: 8.400px; white-space: nowrap; box-sizing: border-box; padding-left: 3px; }
.ban-lock { width: 10px; height: 12px; }
.ban-b { margin-left: 6px; font-weight: bold; color: #444; width: 78px; flex: none; }
.ban-t { color: #555; width: 129px; flex: none; }
.ban-sep { width: 1px; height: 21px; background: #d8d8d8; flex: none; }
.ban-l { color: #2a78b4; margin-left: 10px; }

.meshpanel { position: absolute; left: 1302px; top: 98px; width: 195px; height: 282px; box-sizing: border-box; background: #f0f0f0; border: 1px solid #cfcfcf; display: flex; flex-direction: column; font-size: 8.500px; color: #444; }
.mp-head { height: 15px; margin-bottom: 2.500px; flex: none; display: flex; align-items: center; }
.mp-grip { width: 1px; height: 7px; background: #777; margin-left: 2px; }
.mp-dot { width: 7px; height: 7px; margin-left: 5px; }
.mp-title { margin-left: 4px; color: #6d6d6d; }
.mp-ff { width: 8px; height: 6px; margin-left: auto; margin-right: 3px; }
.mp-row { height: 23.400px; flex: none; display: flex; align-items: center; padding-left: 9px; }
.mp-row label { width: 89px; flex: none; white-space: nowrap; }
.mp-row label.tiny { font-size: 8px; }
.mp-row.off { color: #b4b4b4; }
.pick { width: 49px; height: 22px; background: #0696d7; color: #fff; display: flex; align-items: center; padding-left: 6px; box-sizing: border-box; white-space: nowrap; overflow: hidden; }
.pick svg { width: 7px; height: 11px; margin-right: 4px; flex: none; }
.pick-x { width: 7px; height: 7px; margin-left: 8px; }
.drop { width: 71px; height: 21px; box-sizing: border-box; background: #fff; border: 1px solid #dcdcdc; display: flex; align-items: center; justify-content: space-between; padding: 0 4px; white-space: nowrap; }
.drop.flat { background: none; border-color: transparent; }
.check { width: 9px; height: 9px; border: 1px solid #777; border-radius: 2px; background: #e4e4e4; margin-left: 4px; }
.zero { margin-left: 4px; }
.mp-row.sect { padding-left: 3px; color: #3c3c3c; }
.mp-row.sect svg { width: 5px; height: 7px; margin-right: 5px; }
.mp-row.sect.open svg { width: 7px; height: 5px; margin-right: 3px; }
.mp-row.sect b { font-size: 8.500px; }
.mp-foot { flex: 1; border-top: 1px solid #dcdcdc; display: flex; align-items: center; padding-left: 6px; }
.mp-info { width: 10px; height: 10px; }
.btn { width: 47px; height: 15px; padding: 0; background: #e4e4e4; border: 1px solid #cdcdcd; font: 9.300px "Liberation Sans", sans-serif; color: #777; }
.btn.ok { margin-left: 67px; margin-right: 8px; }

.comments { position: absolute; left: 3px; top: 637px; width: 234px; height: 19px; box-sizing: border-box; background: #f0f0f0; border: 1px solid #d4d4d4; display: flex; align-items: center; padding-left: 19px; }
.c-title { font-size: 8.500px; color: #777; }

.navbar { position: absolute; left: 656px; top: 638px; width: 186px; height: 18px; background: rgba(240,240,240,.75); display: flex; align-items: center; padding-left: 3px; gap: 6px; box-sizing: border-box; }
.navitem { display: flex; align-items: center; }
.navitem:first-child { margin-right: -2px; }
.navitem:nth-child(n+7) { margin-left: -3px; }
.navitem svg { width: 14px; height: 14px; }
.navitem .caret { margin-left: 2px; }
.status { position: absolute; right: 15px; top: 642px; font-size: 9.700px; color: #333; }

.timeline { height: 38px; flex: none; background: #f0f0f0; display: flex; position: relative; }
.play { width: 111.300px; flex: none; display: flex; padding: 13px 0 0 4px; box-sizing: border-box; }
.play svg { width: 12px; height: 12px; margin: 0 3.700px; }
.track { display: flex; position: relative; align-items: flex-start; height: 32px; }
.cell { width: 18.800px; height: 32px; flex: none; display: flex; justify-content: center; padding-top: 12px; box-sizing: border-box; position: relative; }
.cell svg { width: 14px; height: 14px; }
.cell::after { content: ""; position: absolute; left: 50%; bottom: 0; width: 1px; height: 5px; background: #cfcfcf; }
.cell::before { content: ""; position: absolute; left: 0; right: 0; bottom: 0; height: 1px; background: #cfcfcf; }
.cell:first-child::before { left: 50%; }
.cell:nth-child(23)::before { right: 50%; }
.slashes { position: absolute; left: 3px; top: 2px; font-size: 9px; font-weight: bold; font-style: italic; color: #555; letter-spacing: -.5px; }
.marker { position: absolute; left: 426px; top: 8px; width: 9px; height: 25px; }
.tl-gear { width: 13px; height: 14px; position: absolute; right: 10px; top: 12px; }
</style>

<style>
html, body { margin: 0; }
</style>
